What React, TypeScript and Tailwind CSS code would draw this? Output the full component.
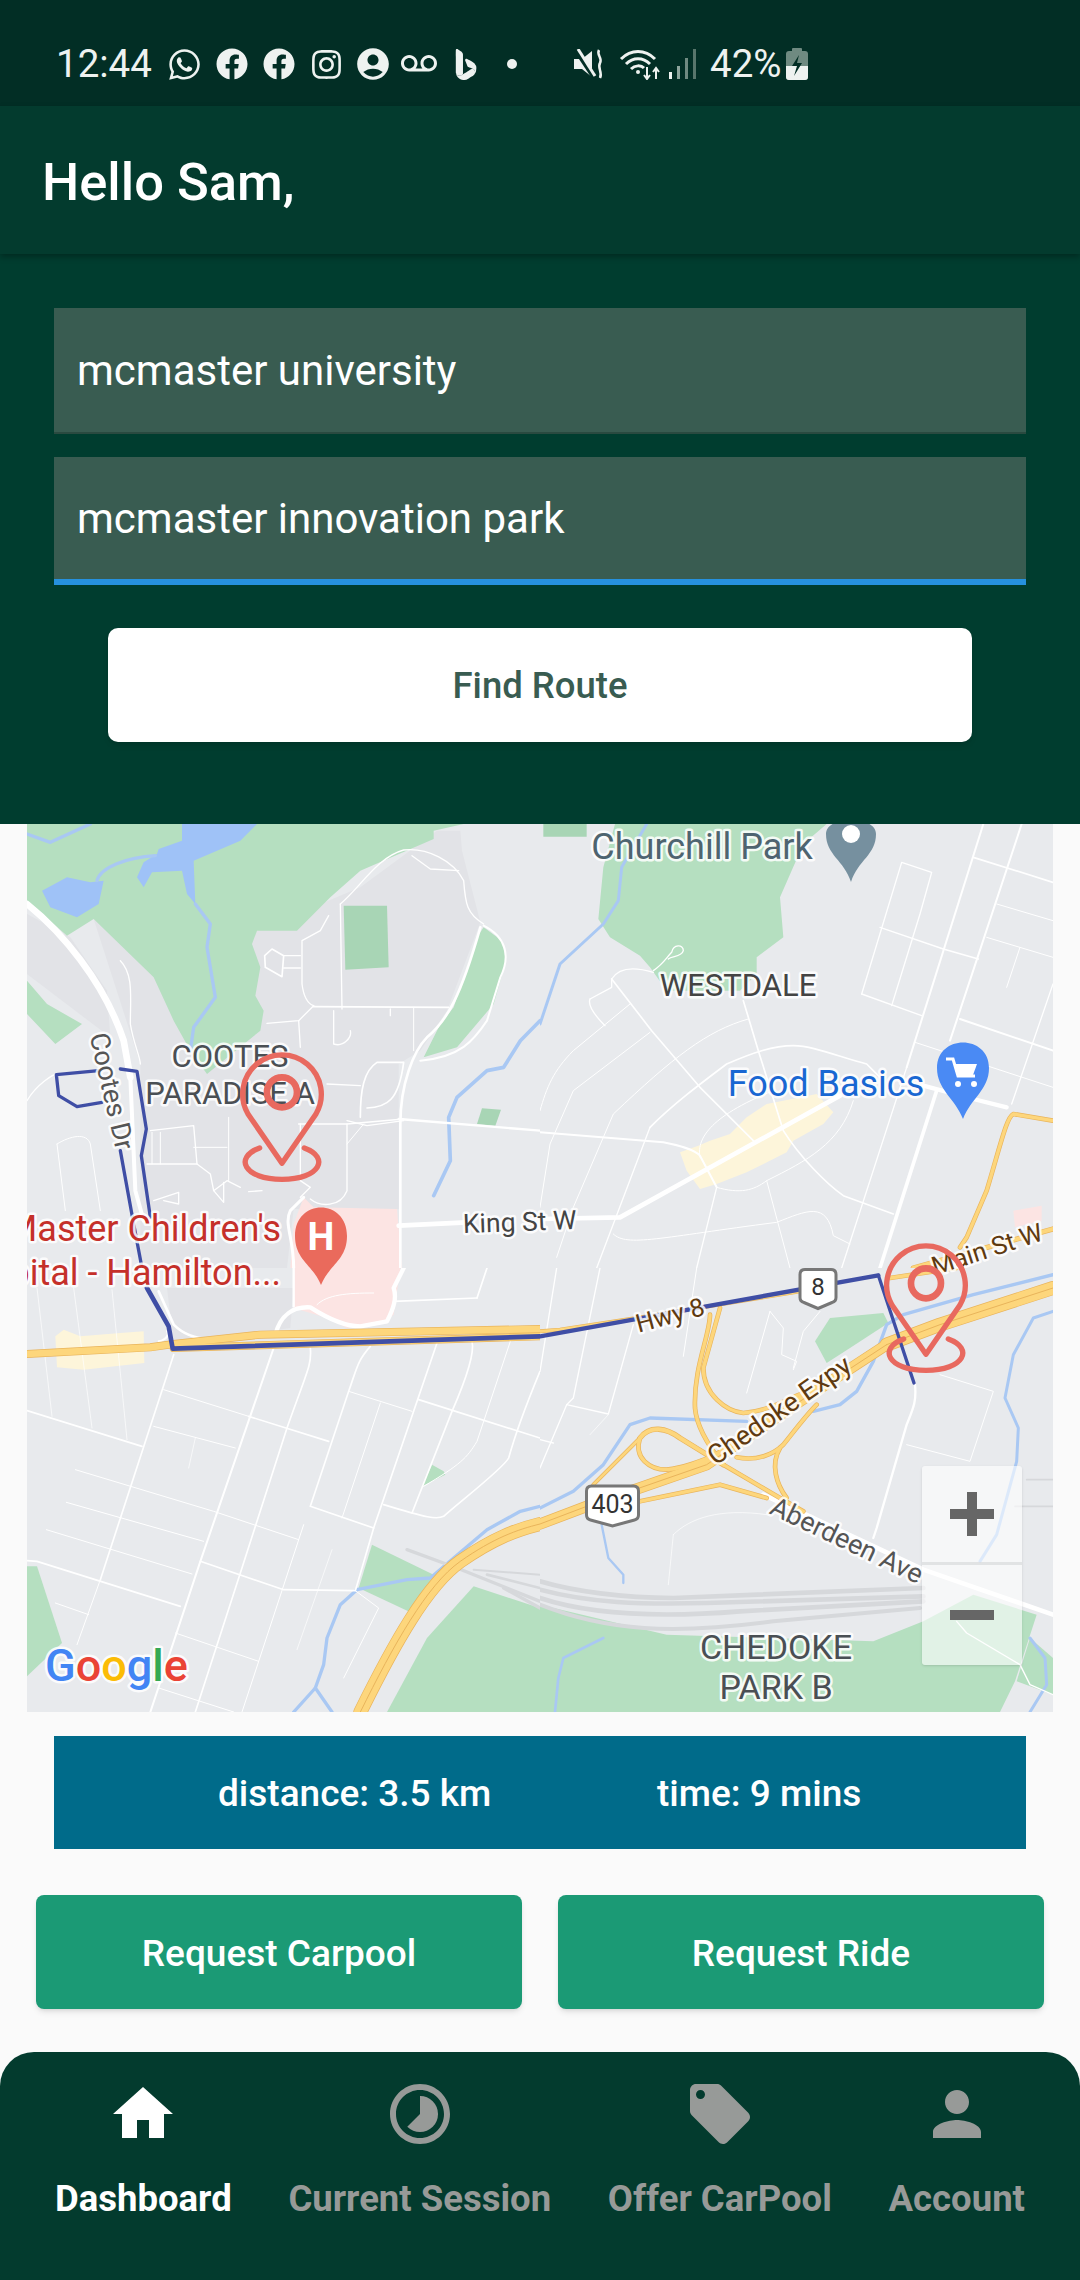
import { FaWhatsapp, FaFacebook, FaInstagram } from 'react-icons/fa'
import { BsBing } from 'react-icons/bs'
import { MdAccountCircle, MdVoicemail, MdHome, MdTimelapse, MdLocalOffer, MdPerson } from 'react-icons/md'

type Stroke = [string, number]
type TileData = {
  x: number
  y: number
  areas: [string, string][]
  water: Stroke[]
  rail?: Stroke[]
  roads: Stroke[]
  highways?: Stroke[]
  route?: Stroke[]
}

const PARK = '#b5dfc0'
const FIELD = '#a8d5b5'
const CAMPUS = '#e2e3e7'
const LAKE = '#9fc2f7'
const SHOPS = '#fdf5da'
const HOSPITAL = '#fce4e3'

// each tile is traced at 3x, so coordinates are relative to its own 1539x1332 box
const tiles: TileData[] = [
  {
    x: 27,
    y: 824,
    areas: [
      ['200,285 690,320 1000,190 1230,20 1300,20 1305,80 1360,295 1260,560 1180,680 1115,720 1115,1155 800,1155 780,1332 340,1332 340,720', CAMPUS],
      ['0,270 130,340 240,500 250,640 0,450', CAMPUS],
      ['0,0 1539,0 1310,0 1220,20 1220,45 1000,140 910,220 810,320 690,320 675,360 700,430 685,515 710,560 700,620 540,750 490,680 440,590 380,460 200,285 120,335 0,230', PARK],
      ['0,470 60,540 165,600 85,660 0,570', PARK],
      ['950,245 1080,245 1085,430 955,437', FIELD],
      ['1370,310 1425,350 1437,410 1400,540 1290,670 1190,700 1240,600 1280,550 1350,340', PARK],
      ['1365,853 1422,857 1405,905 1350,900', FIELD],
      ['830,1120 860,1150 1110,1155 1125,1332 790,1332 800,1200', HOSPITAL],
      ['465,0 690,0 640,50 500,110 505,240 480,210 465,140 375,145 350,190 330,160 350,115 390,90 395,75 465,50', LAKE],
      ['45,200 120,160 190,175 230,170 215,240 150,280 70,250', LAKE],
    ],
    water: [
      ['M385 95C300 100 220 130 210 170', 10],
      ['M0 30L70 55L190 0', 10],
      ['M505 240L550 300L540 370L565 520L500 610L490 680', 10],
      ['M1539 590L1480 650L1430 730L1380 740L1290 820L1265 880L1270 1010L1220 1115', 11],
    ],
    roads: [
      ['M0 240C100 320 230 470 290 650L310 760', 20],
      ['M310 760L325 1100L350 1190', 12],
      ['M280 410C320 450 310 520 310 600C320 660 340 700 340 720', 4],
      ['M1115 1205L1320 1195', 14],
      ['M1120 1332L1120 900C1120 780 1160 680 1200 640C1260 590 1300 520 1360 310', 8],
      ['M1370 305C1440 340 1450 400 1420 460L1380 590C1340 650 1300 700 1180 710', 6],
      ['M1115 885L1539 920', 7],
      ['M815 900L960 900L1130 885', 5],
      ['M960 890L1020 905L1130 890', 4],
      ['M940 240C1000 190 1050 100 1130 78C1200 70 1280 110 1310 170C1315 240 1320 270 1370 300', 4],
      ['M1155 95L1210 135L1295 140', 4],
      ['M940 240L945 555', 4],
      ['M860 548L1265 550', 5],
      ['M1160 550L1160 680', 3],
      ['M905 275L880 320L825 350L825 480C830 520 845 540 860 545', 4],
      ['M860 545L815 590L720 598', 4],
      ['M815 590L820 670', 4],
      ['M713 395L735 375L770 395L765 458L715 430Z', 5],
      ['M770 395L820 395M770 432L820 432', 4],
      ['M920 560L920 660C950 670 975 640 970 620', 4],
      ['M1090 555V575', 4],
      ['M900 780L1000 785', 4],
      ['M1000 880C1000 800 1010 740 1050 715L1130 715C1115 830 1080 850 1020 852', 5],
      ['M960 900V1100C940 1150 880 1150 850 1125', 4],
      ['M960 960L1010 900', 3],
      ['M360 1020L510 1020L550 1050L560 1100L600 1070L640 1090', 4],
      ['M370 920L500 905L510 1020', 4],
      ['M500 970L600 970M605 880V1070M375 925V1020M400 925V1020', 3],
      ['M560 1100L590 1135V1075', 4],
      ['M380 1130L455 1105V1140L410 1130', 4],
      ['M820 1120L850 1090L820 1070V900', 4],
      ['M665 1103L705 1100', 4],
      ['M90 960C130 935 180 925 190 960L220 1160M90 960L115 1160', 3],
      ['M0 830C30 780 80 750 90 750', 4],
      ['M800 1332C800 1240 770 1200 790 1160L830 1120', 9],
    ],
    route: [
      ['M215 740L88 752L95 815L150 848L225 835', 10],
      ['M280 735L330 742L358 915L343 995L370 1180', 10],
      ['M280 980L320 1200L345 1332', 10],
    ],
  },
  {
    x: 540,
    y: 824,
    areas: [
      ['225,0 860,0 790,60 720,220 730,340 650,400 650,450 600,500 380,500 330,430 300,395 210,340 175,285 190,130', PARK],
      ['10,0 140,0 140,38 10,38', FIELD],
      ['420,985 475,965 510,950 570,930 620,880 680,840 830,810 880,865 850,900 760,950 740,985 620,1045 530,1080 480,1095 440,1040', SHOPS],
      ['1420,1160 1505,1145 1505,1190 1425,1210', HOSPITAL],
    ],
    water: [['M320 0L245 130L235 230L190 300L60 420L40 480L0 600', 9]],
    roads: [
      ['M0 1185L240 1180L900 815', 14],
      ['M1150 785L1300 825L1400 850', 13],
      ['M1020 1332L1190 800', 11],
      ['M1100 730L1330 0', 6],
      ['M1230 650L1445 0', 6],
      ['M905 1332L1100 730', 4],
      ['M1415 840L1539 480', 4],
      ['M1300 100L1539 175', 5],
      ['M1210 375L1315 405', 5],
      ['M1260 585L1539 680', 6],
      ['M1020 310L1210 375', 4],
      ['M965 510L1085 115L1175 145L1140 270L1055 545', 4],
      ['M965 510L1145 575', 4],
      ['M1125 655L1539 790', 3],
      ['M1340 340L1539 400M1370 240L1539 290M1440 370L1400 490', 3],
      ['M330 910C400 840 480 780 560 720C640 685 700 665 760 665C820 665 900 700 980 720C1000 740 1010 750 1030 770', 5],
      ['M0 925L370 955C420 965 460 975 480 995L530 1090', 6],
      ['M215 465L335 620L480 790L640 950', 5],
      ['M610 530L655 680L730 920C780 1000 860 1080 910 1115L1060 1170', 5],
      ['M530 1090L470 1332', 4],
      ['M330 910L170 1332', 4],
      ['M530 1090C600 1110 640 1100 680 1070C800 1010 900 960 940 830', 3],
      ['M480 1000C470 950 500 880 700 800', 3],
      ['M215 465C240 425 290 430 340 445', 4],
      ['M340 440C370 420 380 400 395 385C400 360 430 360 430 380C425 400 395 395 385 405', 4],
      ['M150 525L215 490L215 465', 4],
      ['M150 525C140 550 180 590 195 605', 4],
      ['M270 540L100 680C40 740 20 790 0 860', 3],
      ['M330 625L100 800L30 960L0 1150', 3],
      ['M625 585C500 620 400 700 220 870L100 1150L50 1300', 3],
      ['M680 1070L750 1332', 3],
      ['M220 1230C260 1270 360 1240 710 1195C800 1160 860 1130 880 1235L930 1260', 3],
    ],
    highways: [
      ['M1539 890L1420 870C1400 880 1385 950 1340 1100L1280 1240L1260 1270', 10],
      ['M1120 1332L1539 1215', 12],
    ],
  },
  {
    x: 27,
    y: 1268,
    areas: [
      ['85,205 110,185 160,205 280,195 350,190 352,285 170,305 90,298', SHOPS],
      ['420,60 800,60 790,180 440,230', CAMPUS],
      ['800,0 1120,0 1100,140 1080,155 960,180 900,150 800,120', HOSPITAL],
      ['0,895 30,895 105,1125 0,1225', PARK],
      ['1035,830 1220,920 1155,1035 995,960', PARK],
      ['1340,955 1539,1020 1539,1332 1080,1332 1200,1110', PARK],
      ['1185,655 1215,590 1250,610 1255,620', PARK],
    ],
    water: [
      ['M1539 715L1480 730L1380 785L1280 870L1210 930L1140 935L990 965L940 1010L900 1110L890 1190L865 1260L800 1332', 10],
      ['M865 1260L915 1332', 10],
    ],
    rail: [
      ['M1140 845L1290 900L1539 1000', 10],
      ['M1340 905L1539 920', 6],
      ['M1380 920L1539 960', 8],
      ['M1430 960L1539 1020', 10],
    ],
    roads: [
      ['M395 70L440 170C470 200 510 215 560 212', 8],
      ['M420 190C430 210 400 220 395 220', 6],
      ['M745 200C760 140 800 115 850 118C900 150 950 175 1000 175L1080 160C1100 120 1110 90 1100 60L1130 0', 13],
      ['M800 0L800 115', 7],
      ['M1100 100L1350 90', 5],
      ['M1350 90L1380 0', 5],
      ['M870 110C900 80 960 75 1040 75', 3],
      ['M1539 510L1175 395', 5],
      ['M440 260L220 935', 5],
      ['M220 935L150 1130', 3],
      ['M740 240L520 880L370 1332', 6],
      ['M850 240C855 290 840 310 780 480L640 915L505 1332', 5],
      ['M1030 235C990 280 990 300 965 370L850 715L1040 780', 5],
      ['M1230 225L1040 780L985 968L770 965L520 880', 5],
      ['M1335 220C1345 260 1310 350 1275 430L1155 735', 5],
      ['M1539 310C1510 380 1470 480 1445 570C1430 600 1300 700 1250 745C1230 755 1200 750 1070 710', 5],
      ['M1450 220L1350 520C1320 570 1300 590 1190 655', 3],
      ['M410 365L665 445', 3],
      ['M665 445L905 520', 5],
      ['M965 370L1155 430', 3],
      ['M380 475L625 540', 3],
      ['M505 510L485 600', 2],
      ['M145 605L560 730L815 815', 3],
      ['M118 703L530 820', 3],
      ['M58 785L495 918', 3],
      ['M0 428L345 535', 5],
      ['M0 878L30 880L460 1015', 5],
      ['M30 60L75 445M140 60L195 480M255 65L300 515', 2],
      ['M1060 405L945 750', 3],
      ['M830 770L645 1332', 3],
      ['M915 845L810 1145', 2],
      ['M445 1095L695 1180', 3],
      ['M85 1005L185 1040', 3],
      ['M985 968L1055 1020L950 1230', 3],
      ['M395 1260L620 1332', 3],
    ],
    highways: [
      ['M0 258L370 238L440 228L700 200L1539 183', 20],
      ['M440 240L1539 205', 20],
      ['M1000 1332C1100 1130 1200 950 1300 880C1400 810 1470 785 1539 768', 38],
    ],
    route: [['M360 60L425 175L437 242L1539 205', 14]],
  },
  {
    x: 540,
    y: 1268,
    areas: [
      ['0,1010 380,1100 1000,1120 1150,1060 1300,980 1490,1040 1425,1240 1380,1332 0,1332', PARK],
      ['1470,1110 1539,1170 1539,1280 1430,1240', PARK],
      ['825,220 870,150 1030,135 1045,165 930,240 860,285', PARK],
    ],
    water: [
      ['M1539 20L1300 80L1090 140L1040 170L1000 280L950 370L900 410L820 430', 10],
      ['M620 460L330 450L270 470L190 590L100 670L0 720', 10],
      ['M1539 130L1480 150L1420 260L1395 390L1435 480L1430 580L1370 800L1320 880', 9],
      ['M185 770L205 870L250 920V945', 7],
      ['M190 1110L70 1170L55 1230L45 1332', 8],
      ['M1470 1110L1515 1170L1520 1250L1470 1332', 9],
    ],
    rail: [
      ['M0 940C100 970 250 990 400 990L1150 960', 14],
      ['M0 965C150 1005 300 1010 500 1005L1150 985', 14],
      ['M0 990C150 1040 350 1050 600 1030L1150 1000', 14],
      ['M0 1010C200 1090 400 1100 700 1060L1140 1020', 12],
      ['M1460 635H1539M1425 715H1539', 5],
    ],
    roads: [
      ['M670 680L1150 905L1539 1040', 14],
      ['M1125 350C1130 400 1120 420 1100 470L1010 780L1000 810', 7],
      ['M470 0L430 265', 3],
      ['M0 310L50 0', 4],
      ['M180 0L100 390L80 410L205 438L280 170', 4],
      ['M80 410L0 600', 4],
      ['M0 515L40 525', 4],
      ['M150 500L205 440', 2],
      ['M690 130L620 375', 3],
      ['M690 130L730 180L725 260L770 280L760 305', 3],
      ['M840 130L790 190L760 300', 3],
      ['M1200 320L1360 370L1290 580L1100 530', 3],
      ['M1250 1060L1280 1095L1440 1190L1470 1250L1539 1280', 4],
      ['M400 800C450 750 540 720 680 740M400 800L385 950', 2],
    ],
    highways: [
      ['M0 190L60 185L290 150L780 70', 8],
      ['M1050 30L1250 0', 10],
      ['M540 120L490 300C490 380 560 430 610 435C680 430 730 400 800 370', 10],
      ['M510 140C510 200 460 300 465 420C470 480 510 540 550 590L720 690L790 730', 10],
      ['M300 510C330 470 380 480 420 510L550 590', 12],
      ['M300 510C280 570 330 605 380 605C430 600 480 580 530 560', 10],
      ['M160 650L300 510', 8],
      ['M300 700L540 650L680 690', 10],
      ['M590 568C650 580 700 560 730 530C770 480 800 440 830 410', 10],
      ['M720 540C690 590 710 650 740 690', 10],
      ['M0 768L140 715L500 590L780 400L1040 230', 30],
      ['M1040 230L1200 170L1539 60', 38],
    ],
    route: [
      ['M0 205L1015 22', 13],
      ['M1015 22L1122 345', 10],
    ],
  },
]

function Strokes({ items, color }: { items: Stroke[]; color: string }) {
  return (
    <g fill="none" stroke={color} strokeLinejoin="round" strokeLinecap="round">
      {items.map(([d, w]) => (
        <path key={d} d={d} strokeWidth={w} />
      ))}
    </g>
  )
}

function Tile({ tile }: { tile: TileData }) {
  const { x, y, areas, water, rail, roads, highways, route } = tile
  const edges: Stroke[] = (highways ?? []).map(([d, w]) => [d, w + 4])
  const centres: Stroke[] = (highways ?? []).filter(([, w]) => w > 25).map(([d]) => [d, 3])
  return (
    <svg x={x} y={y} width={513} height={444} viewBox="0 0 1539 1332">
      {areas.map(([points, fill]) => (
        <polygon key={points} points={points} fill={fill} />
      ))}
      <Strokes items={water} color="#a9c8f3" />
      {rail && <Strokes items={rail} color="#d6d8db" />}
      <Strokes items={roads} color="#ffffff" />
      <Strokes items={edges} color="#e9b45b" />
      <Strokes items={highways ?? []} color="#fdd67c" />
      <Strokes items={centres} color="#e9b45b" />
      {route && <Strokes items={route} color="#3f4ea5" />}
    </svg>
  )
}

function Pin({ x, y }: { x: number; y: number }) {
  return (
    <g transform={`translate(${x} ${y}) scale(0.3333)`} fill="none" stroke="#e8695f">
      <path d="M765 1018L663 870A118 118 0 1 1 867 870Z" strokeWidth="16" strokeLinejoin="round" />
      <circle cx="765" cy="805" r="45" strokeWidth="20" />
      <path d="M698 972C620 1000 650 1066 765 1066C880 1066 910 1000 832 972" strokeWidth="16" strokeLinecap="round" />
    </g>
  )
}

function Shield({ x, y, w, h, label, size }: { x: number; y: number; w: number; h: number; label: string; size: number }) {
  const l = x - w / 2
  const r = x + w / 2
  const t = y - h / 2
  const b = y + h / 2
  return (
    <g>
      <path d={`M${l + 5} ${t}H${r - 5}Q${r} ${t} ${r} ${t + 5}V${b - 11}Q${r} ${b - 7} ${r - 4} ${b - 6}L${x} ${b}L${l + 4} ${b - 6}Q${l} ${b - 7} ${l} ${b - 11}V${t + 5}Q${l} ${t} ${l + 5} ${t}Z`} fill="#fff" stroke="#777" strokeWidth="3" />
      <text x={x} y={y + size * 0.27} textAnchor="middle" fontSize={size} fill="#333">{label}</text>
    </g>
  )
}

function MapArt() {
  return (
    <svg viewBox="27 824 1026 888" className="block h-full w-full">
      <rect x="27" y="824" width="1026" height="888" fill="#e8eaed" />
      {tiles.map((t) => (
        <Tile key={t.x + '-' + t.y} tile={t} />
      ))}

      <Shield x={818} y={1289} w={36} h={39} label="8" size={24} />
      <Shield x={612.5} y={1506} w={52} h={40} label="403" size={25} />

      {/* poi markers */}
      <path d="M826 834C826 815 876 815 876 834C876 855 858 860 851 882C844 860 826 855 826 834Z" fill="#76909f" />
      <circle cx="851" cy="834" r="9" fill="#fff" />
      <path d="M937 1068C937 1034 989 1034 989 1068C989 1090 971 1098 963 1119C955 1098 937 1090 937 1068Z" fill="#4a8af4" />
      <path d="M946 1059H953L958 1076H975" fill="none" stroke="#fff" strokeWidth="3" />
      <polygon points="955,1064 977,1064 973,1075 958,1075" fill="#fff" />
      <circle cx="958" cy="1084" r="3" fill="#fff" />
      <circle cx="974" cy="1084" r="3" fill="#fff" />
      <path d="M295 1236C295 1198 347 1198 347 1236C347 1260 329 1265 321 1285C313 1265 295 1260 295 1236Z" fill="#ea6a5c" />
      <text x="321" y="1250" textAnchor="middle" fontSize="38" fontWeight="700" fill="#fff">H</text>

      {/* labels */}
      <g stroke="#fff" strokeWidth="5" strokeLinejoin="round" strokeOpacity="0.85" className="[paint-order:stroke]">
        <text x="702" y="859" textAnchor="middle" fontSize="36" fill="#4e6470">Churchill Park</text>
        <text x="738" y="996" textAnchor="middle" fontSize="31" fill="#444">WESTDALE</text>
        <text x="230" y="1067" textAnchor="middle" fontSize="31" fill="#4a4f54">COOTES</text>
        <text x="230" y="1104" textAnchor="middle" fontSize="31" fill="#4a4f54">PARADISE A</text>
        <text x="826" y="1096" textAnchor="middle" fontSize="36" fill="#1967d2">Food Basics</text>
        <text x="281" y="1241" textAnchor="end" fontSize="36" fill="#c5302a">McMaster Children's</text>
        <text x="281" y="1285" textAnchor="end" fontSize="36" fill="#c5302a">Hospital - Hamilton...</text>
        <text x="520" y="1231" textAnchor="middle" fontSize="26.500" fill="#444" transform="rotate(-2 520 1231)">King St W</text>
        <text dy="0.35em" textAnchor="middle" fontSize="27" fill="#555" transform="translate(112 1091) rotate(77)">Cootes Dr</text>
        <text dy="0.35em" textAnchor="middle" fontSize="25.500" fill="#5f3a10" transform="translate(987 1249) rotate(-18)">Main St W</text>
        <text dy="0.35em" textAnchor="middle" fontSize="25.500" fill="#5f3a10" transform="translate(670 1315) rotate(-15)">Hwy 8</text>
        <text dy="0.35em" textAnchor="middle" fontSize="27" fill="#5f3a10" transform="translate(779 1410) rotate(-35)">Chedoke Expy</text>
        <text dy="0.35em" textAnchor="middle" fontSize="27" fill="#555" transform="translate(847 1540) rotate(25.500)">Aberdeen Ave</text>
        <text x="776" y="1659" textAnchor="middle" fontSize="34" fill="#4a4f54">CHEDOKE</text>
        <text x="776" y="1699" textAnchor="middle" fontSize="34" fill="#4a4f54">PARK B</text>
        <text x="45" y="1681" fontSize="45" fontWeight="500">
          <tspan fill="#4285f4">G</tspan>
          <tspan fill="#ea4335">o</tspan>
          <tspan fill="#fbbc05">o</tspan>
          <tspan fill="#4285f4">g</tspan>
          <tspan fill="#34a853">l</tspan>
          <tspan fill="#ea4335">e</tspan>
        </text>
      </g>

      <Pin x={27} y={824} />
      <Pin x={671} y={1015} />
    </svg>
  )
}

function StatusBar() {
  return (
    <div className="box-border flex h-[106px] items-center bg-[#022e25] pl-[56px] pt-[22px] text-[#eef2f0]">
      <span className="w-[96px] text-[38.5px] leading-none">12:44</span>
      <FaWhatsapp className="ml-[15px] h-[35px] w-[35px]" />
      <FaFacebook className="ml-[14px] h-[32px] w-[32px]" />
      <FaFacebook className="ml-[15px] h-[32px] w-[32px]" />
      <FaInstagram className="ml-[15px] h-[33px] w-[33px]" />
      <MdAccountCircle className="ml-[11px] h-[38px] w-[38px]" />
      <MdVoicemail className="ml-[9px] h-[36px] w-[36px]" />
      <BsBing className="ml-[13px] h-[31px] w-[31px]" />
      <span className="ml-[26px] h-[10px] w-[10px] rounded-full bg-[#eef2f0]" />
      <svg viewBox="0 0 30 30" className="ml-[57px] h-[30px] w-[30px]">
        <path d="M0 10H8L18 2V28L8 20H0Z" fill="currentColor" />
        <path d="M2 1L20 28" stroke="#022e25" strokeWidth="5" />
        <path d="M4 0L21 27" stroke="currentColor" strokeWidth="3" />
        <path d="M25 1C22 6 29 9 26 14C23 19 29 23 26 29" fill="none" stroke="currentColor" strokeWidth="2.500" />
      </svg>
      <svg viewBox="0 0 42 32" className="ml-[15px] h-[32px] w-[42px]" fill="none" stroke="currentColor">
        <path d="M2 11C12 1 26 1 36 11" strokeWidth="3" />
        <path d="M7 16C14 9 24 9 31 16" strokeWidth="3" />
        <path d="M12 21C16 17 22 17 25 20" strokeWidth="3" />
        <circle cx="19" cy="24" r="2" fill="currentColor" stroke="none" />
        <path d="M28 31V19M25 27L28 31L31 27M37 31V20M34 24L37 20L40 24" strokeWidth="2" />
      </svg>
      <svg viewBox="0 0 30 30" className="ml-[7px] h-[30px] w-[30px]">
        <rect x="1" y="23" width="3" height="7" fill="currentColor" />
        <rect x="9" y="17" width="3" height="13" fill="#8da49c" />
        <rect x="17" y="9" width="3" height="21" fill="#6f8a81" />
        <rect x="25" y="0" width="3" height="30" fill="#58766c" />
      </svg>
      <span className="ml-[12px] text-[38.5px] leading-none">42%</span>
      <svg viewBox="0 0 22 32" className="ml-[5px] h-[32px] w-[22px]">
        <rect x="6" y="0" width="10" height="4" rx="1" fill="#6f8a81" />
        <rect x="0" y="3" width="22" height="29" rx="3" fill="#6f8a81" />
        <path d="M0 18H22V29a3 3 0 0 1-3 3H3a3 3 0 0 1-3-3Z" fill="#eef2f0" />
        <path d="M13 7L6 18H11L8 28L16 15H11Z" fill="#022e25" />
      </svg>
    </div>
  )
}

const navItems = [
  { label: 'Dashboard', Icon: MdHome, active: true },
  { label: 'Current Session', Icon: MdTimelapse, active: false },
  { label: 'Offer CarPool', Icon: MdLocalOffer, active: false },
  { label: 'Account', Icon: MdPerson, active: false },
]

export default function App() {
  return (
    <div className="flex h-[2280px] w-[1080px] flex-col overflow-hidden bg-[#fafafa] [font-family:Roboto,sans-serif]">
      <StatusBar />

      {/* App bar */}
      <div className="relative z-10 box-border flex h-[148px] items-center bg-[#033b2e] pl-[42px] pt-[5px] shadow-[0_3px_6px_rgba(0,0,0,0.3)]">
        <h1 className="text-[52.5px] font-medium text-white">Hello Sam,</h1>
      </div>

      {/* Route form */}
      <div className="flex h-[570px] flex-col bg-[#003d2f] px-[54px] pt-[54px]">
        <div className="flex h-[126px] items-center border-b-2 border-[#2a4a40] bg-[#395c51] pl-[23px] text-[42px] text-white">
          mcmaster university
        </div>
        <div className="mt-[23px] flex h-[128px] items-center border-b-[6px] border-[#2691de] bg-[#395c51] pl-[23px] text-[42px] text-white">
          mcmaster innovation park
        </div>
        <button className="mx-[54px] mt-[43px] h-[114px] rounded-[10px] bg-white pt-[3px] text-[36.5px] font-medium text-[#395c51] shadow-md">
          Find Route
        </button>
      </div>

      {/* Map */}
      <div className="relative mx-[27px] h-[888px] overflow-hidden">
        <MapArt />
        <div className="absolute left-[895px] top-[642px] flex h-[199px] w-[100px] flex-col rounded-[3px] bg-white/60 shadow-sm">
          <div className="flex h-[99px] items-center justify-center border-b-[3px] border-[#d8dadc]/70">
            <div className="relative h-[44px] w-[44px]">
              <div className="absolute left-0 top-[17px] h-[10px] w-[44px] bg-[#666]" />
              <div className="absolute left-[17px] top-0 h-[44px] w-[10px] bg-[#666]" />
            </div>
          </div>
          <div className="flex flex-1 items-center justify-center">
            <div className="h-[10px] w-[44px] bg-[#666]" />
          </div>
        </div>
      </div>

      {/* Distance and time */}
      <div className="mx-[54px] mt-[24px] flex h-[113px] items-center bg-[#006b8a] pl-[164px] pt-[3px] text-[37px] font-medium text-white">
        <span className="w-[439px]">distance: 3.5 km</span>
        <span>time: 9 mins</span>
      </div>

      {/* Actions */}
      <div className="mt-[46px] flex gap-[36px] px-[36px]">
        <button className="h-[114px] flex-1 rounded-[8px] bg-[#1b9a75] pt-[3px] text-[37px] font-medium text-white shadow-md">
          Request Carpool
        </button>
        <button className="h-[114px] flex-1 rounded-[8px] bg-[#1b9a75] pt-[3px] text-[37px] font-medium text-white shadow-md">
          Request Ride
        </button>
      </div>

      {/* Bottom navigation */}
      <nav className="mt-[43px] flex flex-1 justify-between rounded-t-[34px] bg-[#033b2e] px-[55px] pt-[26px]">
        {navItems.map(({ label, Icon, active }) => (
          <div key={label} className={`flex flex-col items-center ${active ? 'text-white' : 'text-[#979a98]'}`}>
            <Icon className="h-[72px] w-[72px]" />
            <span className="mt-[26px] text-[36.5px] font-bold leading-[46px]">{label}</span>
          </div>
        ))}
      </nav>
    </div>
  )
}
